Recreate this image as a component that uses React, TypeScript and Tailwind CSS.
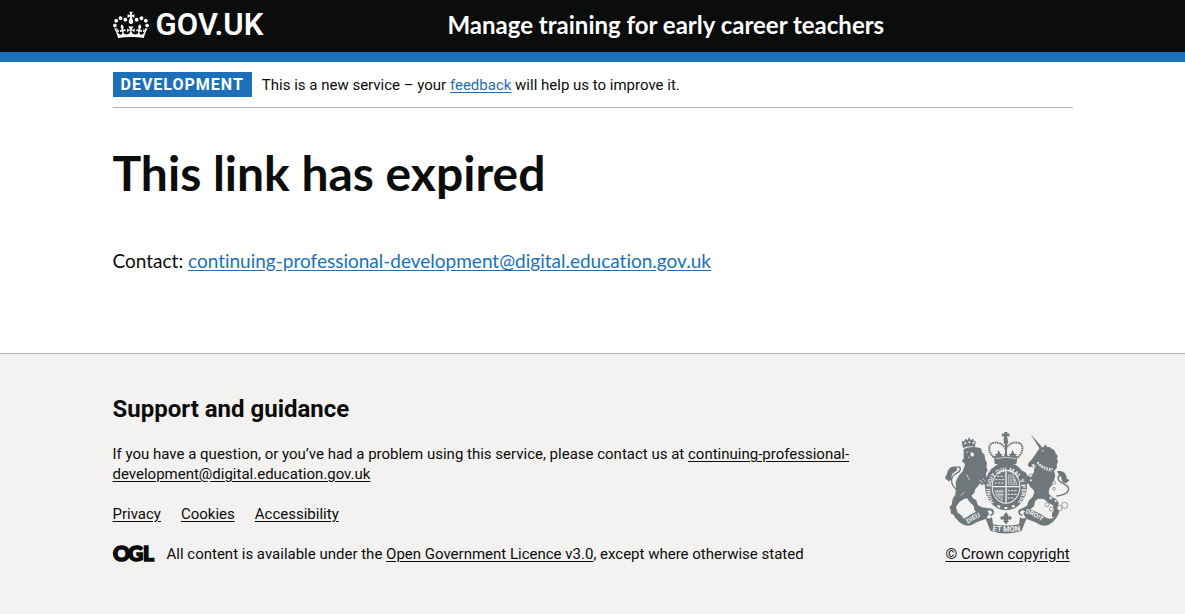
import type { ReactNode } from "react";

const EMAIL = "continuing-professional-development@digital.education.gov.uk";

function Container({ children }: { children: ReactNode }) {
  return <div className="mx-auto w-full max-w-[990px] px-[15px]">{children}</div>;
}

function Crown() {
  return (
    <svg aria-hidden="true" viewBox="0 0 132 97" className="h-[30px] w-9" fill="currentColor">
      <path
        fillRule="evenodd"
        d="M25 30.2c3.5 1.5 7.7-.2 9.1-3.7 1.5-3.6-.2-7.8-3.9-9.2-3.6-1.4-7.6.3-9.1 3.9-1.4 3.5.3 7.5 3.9 9zM9 39.5c3.6 1.5 7.8-.2 9.2-3.7 1.5-3.6-.2-7.8-3.9-9.1-3.6-1.5-7.6.2-9.1 3.8-1.4 3.5.3 7.5 3.8 9zM4.4 57.2c3.5 1.5 7.7-.2 9.1-3.8 1.5-3.6-.2-7.7-3.9-9.1-3.5-1.5-7.6.3-9.1 3.8-1.4 3.5.3 7.6 3.9 9.1zm38.3-21.4c3.5 1.5 7.7-.2 9.1-3.8 1.5-3.6-.2-7.7-3.9-9.1-3.6-1.5-7.6.3-9.1 3.8-1.3 3.6.4 7.7 3.9 9.1zm64.4-5.6c-3.6 1.5-7.8-.2-9.1-3.7-1.5-3.6.2-7.8 3.8-9.2 3.6-1.4 7.7.3 9.2 3.9 1.3 3.5-.4 7.5-3.9 9zm15.9 9.3c-3.6 1.5-7.7-.2-9.1-3.7-1.5-3.6.2-7.8 3.7-9.1 3.6-1.5 7.7.2 9.2 3.8 1.5 3.5-.3 7.5-3.8 9zm4.7 17.7c-3.6 1.5-7.8-.2-9.2-3.8-1.5-3.6.2-7.7 3.9-9.1 3.6-1.5 7.7.3 9.2 3.8 1.3 3.5-.4 7.6-3.9 9.1zM89.3 35.8c-3.6 1.5-7.8-.2-9.2-3.8-1.4-3.6.2-7.7 3.9-9.1 3.6-1.5 7.7.3 9.2 3.8 1.4 3.6-.3 7.7-3.9 9.1zM69.7 17.7l8.9 4.7V9.3l-8.9 2.8c-.2-.3-.5-.6-.9-.9L72.4 0H59.6l3.5 11.2c-.3.3-.6.5-.9.9l-8.8-2.8v13.1l8.8-4.7c.3.3.6.7.9.9l-5 15.4v.1c-.2.8-.4 1.6-.4 2.4 0 4.1 3.1 7.5 7 8.1h.2c.3 0 .7.1 1 .1.4 0 .7 0 1-.1h.2c4-.6 7.1-4.1 7.1-8.1 0-.8-.1-1.7-.4-2.4V34l-5.1-15.4c.4-.2.7-.6 1-.9zM66 92.8c16.9 0 32.8 1.1 47.1 3.2 4-16.9 8.9-26.7 14-33.5l-9.6-3.4c1 4.9 1.1 7.2 0 10.2-1.5-1.4-3-4.3-4.2-8.7L108.6 76c2.8-2 5-3.2 7.5-3.3-4.4 9.4-10 11.9-13.6 11.2-4.3-.8-6.3-4.6-5.6-7.9 1-4.7 5.7-5.9 8-.5 4.3-8.7-3-11.4-7.6-8.8 7.1-7.2 7.9-13.5 2.1-21.1-8 6.1-8.1 12.3-4.5 20.8-4.7-5.4-12.1-2.5-9.5 6.2 3.4-5.2 7.9-2 7.2 3.1-.6 4.3-6.4 7.8-13.5 7.2-10.3-.9-10.9-8-11.2-13.8 2.5-.5 7.1 1.8 11 7.3L80.2 60c-4.1 4.4-8 5.3-12.3 5.4 1.4-4.4 8-11.6 8-11.6H55.5s6.4 7.2 7.9 11.6c-4.2-.1-8-1-12.3-5.4l1.4 16.4c3.9-5.5 8.5-7.7 10.9-7.3-.3 5.8-.9 12.8-11.1 13.8-7.2.6-12.9-2.9-13.5-7.2-.7-5 3.8-8.3 7.1-3.1 2.7-8.7-4.6-11.6-9.4-6.2 3.7-8.5 3.6-14.7-4.6-20.8-5.8 7.6-5 13.9 2.2 21.1-4.7-2.6-11.9.1-7.7 8.8 2.3-5.5 7.1-4.2 8.1.5.7 3.3-1.3 7.1-5.7 7.9-3.5.7-9-1.8-13.5-11.2 2.5.1 4.7 1.3 7.5 3.3l-4.7-15.4c-1.2 4.4-2.7 7.2-4.3 8.7-1.1-3-.9-5.3 0-10.2l-9.5 3.4c5 6.9 9.9 16.7 14 33.5 14.8-2.1 30.8-3.2 47.7-3.2z"
      />
    </svg>
  );
}

function OglLogo() {
  return (
    <svg
      role="img"
      aria-label="Open Government Licence"
      viewBox="0 0 41 17"
      className="mb-0.5 h-[17px] w-[41px] shrink-0 overflow-visible font-['Lato'] text-[21px] font-black"
      fill="currentColor"
      stroke="currentColor"
      strokeWidth="1.6"
    >
      <text x="0" y="16">O</text>
      <text x="15" y="16">G</text>
      <text x="30" y="16">L</text>
    </svg>
  );
}

function RoyalArms() {
  return (
    <svg
      aria-hidden="true"
      viewBox="45 36 375 306"
      className="h-[102px] w-[125px] font-['Roboto'] font-bold text-[#6f777b]"
      fill="currentColor"
    >
      {/* Lion */}
      <path d="M95 62l7 3 4-9 7 5 4-10 5 10 7-5 3 9 5-3-2 19q-18-5-36 3z" />
      <g fill="#f3f2f1">
        <circle cx="106" cy="70" r="3" />
        <circle cx="118" cy="67" r="3" />
        <circle cx="130" cy="69" r="3" />
      </g>
      <path d="M101 87q18-8 38-5l14 3 3 12 8 8 1 12 6 12-2 12 4 10-5 9 1 10 7 13-3 8-8 5-4-5-5 6-5-7-7 9-8 8-3 12-8 7 3 8 11 7 5 15 12 6 15 2 3 9-9 6-12-1-15-2-5-7-2-12-12-11-8-11-9 2-14 9-10 15 5 17 13 9 4 9-8 5-14-5-7-12-8-3-1-11-4-8 7-8 3-17 8-13 2-21-1-17 9-19 12-13 7-18-3-8-7-6 6-6z" />
      <path d="M122 97l8 1 3 6-5 6-6-3z M109 95l6 1-4 3z M114 110l7 2-5 2z" fill="#f3f2f1" />
      <path d="M87 212c-17-5-27-26-20-41 7-14 23-12 24-23 0-10-12-9-18-1" fill="none" stroke="currentColor" strokeWidth="4" />
      <path d="M78 140c-15-2-24 7-26 18-1 9-9 9-5 19 5 5 8 1 8 8 9-3 11-10 10-17 0-8 10-12 17-18z" />
      <path d="M110 163l9 18 M147 180l13 8 M92 226l12-9 M158 176l10 9" fill="none" stroke="#f3f2f1" strokeWidth="2" />
      {/* Unicorn */}
      <path d="M302 42l34 39-7 5z" />
      <path d="M329 84l11-3 7-8 4 8 8 0 6 5 8 4 4 10 6 8-2 9 3 9-4 8 1 9-9 10 4 13-4 15-7 17-7 7-2 14 8 12 13 5 9 12-2 14 4 13-5 10-9 7-8-1 0-11 6-9-3-15-13-7-15-12-17-1-9 8-3 15-13 10-9 7-15 4-5-6 8-9 13-8 5-15 12-12 5-13-3-8-10-9-4-9-8 1-8 13-9-4 5-11 12-11-3-6-13-3-8 2-4-8 5-8 13-3 10 5 4 9 10 3 10-14 0-9 7-10-10 2-10 3-6-6 4-9 8-8z" />
      <path d="M335 91l7 1-4 3z" fill="#f3f2f1" />
      <path d="M322 127q22 21 46 20" fill="none" stroke="#f3f2f1" strokeWidth="6" strokeDasharray="5 3" />
      <path d="M322 132q20 21 44 21" fill="none" stroke="#f3f2f1" strokeWidth="2" />
      <path d="M379 228c27-2 40-13 36-25-4-12-29-13-31-28-1-9 10-12 18-5" fill="none" stroke="currentColor" strokeWidth="4" />
      <path d="M381 154c17-3 25 5 28 14l2 9 8 3-9 8c-12 3-15-5-15-11-1-9-8-9-14-23z" />
      <g fill="#f3f2f1" stroke="currentColor" strokeWidth="2">
        <circle cx="310" cy="136" r="5" />
        <circle cx="302" cy="167" r="5" />
        <circle cx="303" cy="181" r="4" />
        <circle cx="372" cy="188" r="5" />
        <circle cx="372" cy="206" r="4" />
        <circle cx="362" cy="234" r="5" />
        <circle cx="351" cy="254" r="6" />
        <circle cx="364" cy="267" r="6" />
        <circle cx="389" cy="264" r="8" />
        <circle cx="404" cy="256" r="9" />
        <circle cx="377" cy="243" r="4" />
      </g>
      {/* Crown above the shield */}
      <path d="M223 36h10l-2 6 7-2v10l-7-2 3 14h-14l3-14-7 2V40l7 2z" />
      <circle cx="228" cy="66" r="7" />
      <path d="M191 111c-18-15-18-42 2-43 17-2 28 7 34 19 7-12 18-21 35-19 20 1 20 28 2 43z" fill="none" stroke="currentColor" strokeWidth="6" strokeDasharray="5 2" />
      <path d="M225 72h6v36h-6z" />
      <path d="M192 110l7-1-5-6 8-2 4-11 5 11 7 2-5 6 8 1 6-16 7 16 7-1-5-6 7-2 5-11 5 11 7 2-4 6 7 1-4 22H194z" />
      <path d="M197 116q31-8 62 0" fill="none" stroke="#f3f2f1" strokeWidth="2" />
      {/* Garter and shield */}
      <ellipse cx="228" cy="199" rx="63" ry="72" />
      <ellipse cx="228" cy="200" rx="43" ry="51" fill="#f3f2f1" />
      <ellipse cx="228" cy="200" rx="40" ry="48" />
      <path d="M228 152v96 M188 200h80" fill="none" stroke="#f3f2f1" strokeWidth="4" />
      <g fill="none" stroke="#f3f2f1" strokeWidth="3" strokeDasharray="7 3">
        <path d="M201 169h22 M196 179h27 M194 189h29 M233 212h30 M233 223h28 M233 234h20" />
      </g>
      <path d="M235 165h15l11 28h-26z M240 171h8l7 17h-14z M243 180h12 M195 209l5 19 19 16 M203 208l2 22 M210 208v28 M216 208v32 M197 214h25 M200 224h22" fill="none" stroke="#f3f2f1" strokeWidth="2" />
      <path id="garter-arc" d="M192 247A47 56 0 1 1 264 247" fill="none" />
      <text fill="#f3f2f1" fontSize="18">
        <textPath href="#garter-arc">HONI SOIT QUI MAL Y PENSE</textPath>
      </text>
      <path d="M204 255l8 3-3 6-8-4z M223 261h9v6h-9z M245 257l7-3 3 6-8 3z" fill="#f3f2f1" />
      {/* Motto ribbon */}
      <path d="M67 276q24 31 44 15 27-20 62-26 16-2 19 9 2 13-13 13l0-8-12 18q-24 7-42 18-34 11-58-39z" />
      <path d="M389 276q-24 31-44 15-27-20-60-26-17-2-20 9-2 13 13 13l0-8 12 18q23 7 41 18 34 11 58-39z" />
      <path d="M164 289q11 12 22 2l3 22q39 7 78 0l3-22q11 10 22-2l-17 43q-47 17-94 0z" />
      <path d="M172 274l9-4 7 8-8 7z M285 274l-9-4-7 8 8 7z" fill="#f3f2f1" />
      <path id="motto-left" d="M114 311Q136 295 180 279" fill="none" />
      <path id="motto-middle" d="M187 332Q228 339 290 331" fill="none" />
      <path id="motto-right" d="M286 279Q318 289 354 320" fill="none" />
      <g fill="#f3f2f1" fontSize="20">
        <text><textPath href="#motto-left">DIEU</textPath></text>
        <text fontSize="23"><textPath href="#motto-middle">ET MON</textPath></text>
        <text fontSize="19"><textPath href="#motto-right">DROIT</textPath></text>
      </g>
      {/* Fleur-de-lis */}
      <path d="M228 276l8 11-4 9c2-9 12-10 13-2 0 6-6 7-8 3l-4 5 6 2-6 2-2 5h-6l-2-5-6-2 6-2-4-5c-2 4-8 3-8-3 1-8 11-7 13 2l-4-9z" />
    </svg>
  );
}

const footerLink = "underline underline-offset-2";
const blueLink = "text-[#1d70b8] underline underline-offset-2";

export default function App() {
  return (
    <div className="flex min-h-screen flex-col bg-[#f3f2f1] font-['Roboto',sans-serif] text-[15px] leading-5 text-[#0b0c0c] [font-variant-ligatures:none]">
      <header className="border-b-10 border-[#1d70b8] bg-[#0b0c0c] text-white">
        <Container>
          <div className="flex h-[52px] items-center pb-0.5">
            <a href="#" aria-label="GOV.UK" className="flex w-1/3 items-center gap-[7px] text-[31px] font-semibold leading-[30px]">
              <Crown />
              <span>GOV.UK</span>
            </a>
            <a href="#" className="pl-[15px] font-['Lato',sans-serif] text-2xl font-bold leading-[30px]">
              Manage training for early career teachers
            </a>
          </div>
        </Container>
      </header>

      <div className="bg-white">
        <Container>
          <div className="flex items-center gap-2.5 border-b border-[#b1b4b6] py-2.5">
            <strong className="bg-[#1d70b8] px-2 py-[5px] text-base font-bold uppercase leading-[15px] tracking-[1px] text-white">
              Development
            </strong>
            <span>
              This is a new service – your <a href="#" className={blueLink}>feedback</a> will help us to improve it.
            </span>
          </div>
          <main className="pt-10 pb-20 font-['Lato',sans-serif]">
            <h1 className="mb-[50px] text-5xl font-bold leading-[50px]">This link has expired</h1>
            <p className="text-[19px] leading-[25px]">
              Contact: <a href={`mailto:${EMAIL}`} className={blueLink}>{EMAIL}</a>
            </p>
          </main>
        </Container>
      </div>

      <footer className="grow border-t border-[#b1b4b6] pt-10 pb-[50px]">
        <Container>
          <div className="flex items-end justify-between gap-[60px]">
            <div className="max-w-[770px]">
              <h2 className="mb-5 text-2xl font-bold leading-[30px]">Support and guidance</h2>
              <p className="mb-5">
                If you have a question, or you’ve had a problem using this service, please contact us at{" "}
                <a href={`mailto:${EMAIL}`} className={footerLink}>{EMAIL}</a>
              </p>
              <ul className="mb-5 flex gap-5">
                <li><a href="#" className={footerLink}>Privacy</a></li>
                <li><a href="#" className={footerLink}>Cookies</a></li>
                <li><a href="#" className={footerLink}>Accessibility</a></li>
              </ul>
              <div className="flex h-5 items-center gap-[13px]">
                <OglLogo />
                <span>
                  All content is available under the{" "}
                  <a href="#" className={footerLink}>Open Government Licence v3.0</a>, except where otherwise stated
                </span>
              </div>
            </div>
            <a href="#" className="flex min-w-[130px] shrink-0 flex-col items-center gap-2.5 underline underline-offset-2">
              <RoyalArms />
              <span>© Crown copyright</span>
            </a>
          </div>
        </Container>
      </footer>
    </div>
  );
}
